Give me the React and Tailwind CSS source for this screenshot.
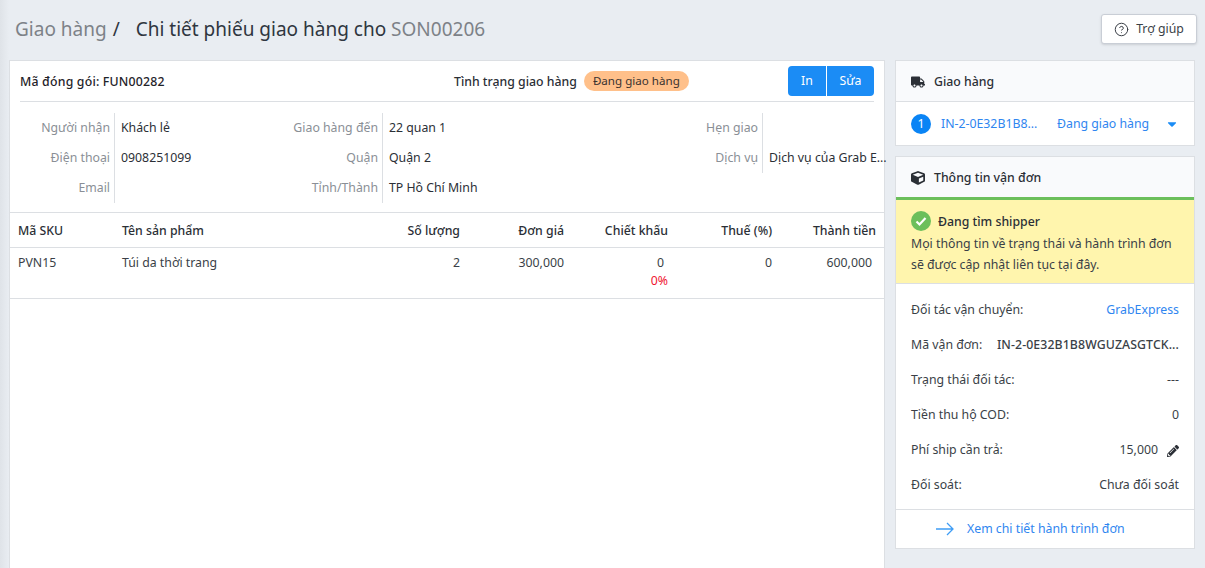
import React from "react";
import { FaTruck, FaCube, FaPencilAlt, FaCaretDown } from "react-icons/fa";
import { CircleHelp } from "lucide-react";

const infoCols = [
  {
    labelW: "w-[104px]",
    valueW: "w-[95px]",
    rows: [
      ["Người nhận", "Khách lẻ"],
      ["Điện thoại", "0908251099"],
      ["Email", ""],
    ],
  },
  {
    labelW: "w-[173px]",
    valueW: "w-[95px]",
    rows: [
      ["Giao hàng đến", "22 quan 1"],
      ["Quận", "Quận 2"],
      ["Tỉnh/Thành", "TP Hồ Chí Minh"],
    ],
  },
  {
    labelW: "w-[285px]",
    valueW: "w-[122px]",
    rows: [
      ["Hẹn giao", ""],
      ["Dịch vụ", "Dịch vụ của Grab E..."],
    ],
  },
];

const shipRows = [
  ["Mã vận đơn:", "IN-2-0E32B1B8WGUZASGTCK...", "font-medium tracking-[0.1px]"],
  ["Trạng thái đối tác:", "---", ""],
  ["Tiền thu hộ COD:", "0", ""],
];

function InfoCol({ labelW, rows, valueW }) {
  return (
    <div className="flex flex-col">
      {rows.map(([label, value]) => (
        <div key={label} className="flex h-[30px] items-center">
          <div className={`${labelW} h-full flex items-center justify-end pr-[4px] text-[#8a8f96]`}>{label}</div>
          <div className={`${valueW} h-full flex items-center border-l border-[#dcdfe3] pl-[6px] text-[#2b2f36] whitespace-nowrap`}>{value}</div>
        </div>
      ))}
    </div>
  );
}

function Row({ label, children }) {
  return (
    <div className="flex h-[35px] items-center justify-between text-[#3a3f47]">
      <span>{label}</span>
      {children}
    </div>
  );
}

export default function App() {
  return (
    <div className="h-[568px] overflow-hidden bg-[#e9edf2] bg-[linear-gradient(to_right,#dfe3e8,#e9edf2_9px)] pl-[9px] pr-[10px] text-[12.3px] font-['Noto_Sans','Open_Sans',sans-serif] text-[#2b2f36]">
      <header className="flex h-[60px] items-center justify-between pb-[2px]">
        <h1 className="pl-[6px] text-[19px] text-[#2f3640]">
          <span className="text-[#7d8288]">Giao hàng</span>
          <span className="ml-[6px] mr-[16px]">/</span>
          Chi tiết phiếu giao hàng cho <span className="text-[#7d8288]">SON00206</span>
        </h1>
        <button className="-mr-[2px] flex h-[30px] w-[96px] items-center justify-center gap-[7px] rounded-[3px] border border-[#c9ced6] bg-white text-[#3a3f47] shadow-sm">
          <CircleHelp size={15} strokeWidth={1.6} />
          Trợ giúp
        </button>
      </header>

      <div className="flex gap-[10px]">
        <main className="h-[520px] w-[876px] border border-[#dcdfe3] bg-white">
          <div className="mx-[10px] flex h-[41px] items-center border-b border-[#dcdfe3]">
            <div className="w-[434px] pt-[3px] font-medium tracking-[0.2px] text-[#1f2329]">Mã đóng gói: FUN00282</div>
            <div className="flex flex-1 items-center gap-[7px]">
              <span className="pt-[3px] font-medium text-[#2b2f36]">Tình trạng giao hàng</span>
              <span className="flex h-[20px] w-[105px] items-center justify-center rounded-full bg-[#ffc08a] text-[11.6px] text-[#3a3330]">Đang giao hàng</span>
            </div>
            <div className="flex gap-px">
              <button className="h-[30px] w-[38px] rounded-l-[4px] bg-[#1b8cf5] text-white">In</button>
              <button className="h-[30px] w-[47px] rounded-r-[4px] bg-[#1b8cf5] text-white">Sửa</button>
            </div>
          </div>

          <div className="flex h-[110px] pt-[11px]">
            {infoCols.map((col) => (
              <InfoCol key={col.labelW} {...col} />
            ))}
          </div>

          <table className="w-full table-fixed border-collapse">
            <thead>
              <tr className="h-[35px] border-y border-[#dcdfe3] text-[#2b2f36]">
                <th className="w-[104px] pl-[8px] pt-[2px] text-left font-medium">Mã SKU</th>
                <th className="w-[244px] pl-[8px] pt-[2px] text-left font-medium">Tên sản phẩm</th>
                <th className="w-[104px] pr-[2px] pt-[2px] text-right font-medium">Số lượng</th>
                <th className="w-[104px] pr-[2px] pt-[2px] text-right font-medium">Đơn giá</th>
                <th className="w-[104px] pr-[2px] pt-[2px] text-right font-medium">Chiết khấu</th>
                <th className="w-[104px] pr-[2px] pt-[2px] text-right font-medium">Thuế (%)</th>
                <th className="pr-[8px] pt-[2px] text-right font-medium">Thành tiền</th>
              </tr>
            </thead>
            <tbody>
              <tr className="h-[51px] border-b border-[#dcdfe3] align-top leading-[18px] text-[#3a3f47]">
                <td className="pl-[8px] pt-[6px]">PVN15</td>
                <td className="pl-[8px] pt-[6px]">Túi da thời trang</td>
                <td className="pr-[2px] pt-[6px] text-right">2</td>
                <td className="pr-[2px] pt-[6px] text-right">300,000</td>
                <td className="pr-[2px] pt-[6px] text-right">
                  <div className="pr-[4px]">0</div>
                  <div className="text-[#f0142f]">0%</div>
                </td>
                <td className="pr-[2px] pt-[6px] text-right">0</td>
                <td className="pr-[12px] pt-[6px] text-right">600,000</td>
              </tr>
            </tbody>
          </table>
        </main>

        <aside className="flex w-[300px] flex-col gap-[10px]">
          <section className="border border-[#dcdfe3] bg-white">
            <div className="flex h-[41px] items-center gap-[9px] border-b border-[#dcdfe3] bg-[#f9fafc] pl-[15px] pt-[2px] font-medium">
              <FaTruck size={14} className="text-[#2b2f36]" />
              Giao hàng
            </div>
            <div className="flex h-[43px] items-center pl-[15px] pt-[1px] text-[#2f86f0]">
              <span className="flex h-[20px] w-[20px] items-center justify-center rounded-full bg-[#0a84f5] text-white">1</span>
              <span className="ml-[10px] w-[116px]">IN-2-0E32B1B8...</span>
              <span className="w-[108px]">Đang giao hàng</span>
              <FaCaretDown size={14} className="text-[#1b8cf5]" />
            </div>
          </section>

          <section className="h-[393px] border border-[#dcdfe3] bg-white">
            <div className="flex h-[40px] items-center gap-[9px] bg-[#f9fafc] pl-[15px] pt-[2px] font-medium">
              <FaCube size={14} className="text-[#2b2f36]" />
              Thông tin vận đơn
            </div>
            <div className="h-[87px] border-b border-[#dcdfe3] border-t-[3px] border-t-[#6cbf5b] bg-[#fff5ad] px-[15px] pt-[11px] leading-[21px] text-[#3a3f47]">
              <div className="mb-[2px] flex h-[20px] items-center gap-[7px] font-medium text-[#2b2f36]">
                <svg width="20" height="20" viewBox="0 0 20 20">
                  <circle cx="10" cy="10" r="10" fill="#6cbf5b" />
                  <path d="M5.5 10.5l3 3 6-6.5" fill="none" stroke="#fff" strokeWidth="2.2" />
                </svg>
                <span className="pt-[1px]">Đang tìm shipper</span>
              </div>
              <p>Mọi thông tin về trạng thái và hành trình đơn</p>
              <p>sẽ được cập nhật liên tục tại đây.</p>
            </div>

            <div className="h-[226px] border-b border-[#dcdfe3] px-[15px] pt-[9px]">
              <Row label="Đối tác vận chuyển:"><span className="text-[#2f86f0]">GrabExpress</span></Row>
              {shipRows.map(([label, value, cls]) => (
                <Row key={label} label={label}><span className={cls}>{value}</span></Row>
              ))}
              <Row label="Phí ship cần trả:">
                <span className="flex items-center gap-[9px]">
                  15,000
                  <FaPencilAlt size={12} className="text-[#2b2f36]" />
                </span>
              </Row>
              <Row label="Đối soát:"><span>Chưa đối soát</span></Row>
            </div>

            <div className="flex h-[37px] items-center pl-[40px] text-[#2f86f0]">
              <svg width="18" height="14" viewBox="0 0 18 14" className="mr-[13px]">
                <path d="M0 7h17M11 1l6 6-6 6" fill="none" stroke="#3f9df5" strokeWidth="1.3" />
              </svg>
              <span className="pt-[1px]">Xem chi tiết hành trình đơn</span>
            </div>
          </section>
        </aside>
      </div>
    </div>
  );
}
